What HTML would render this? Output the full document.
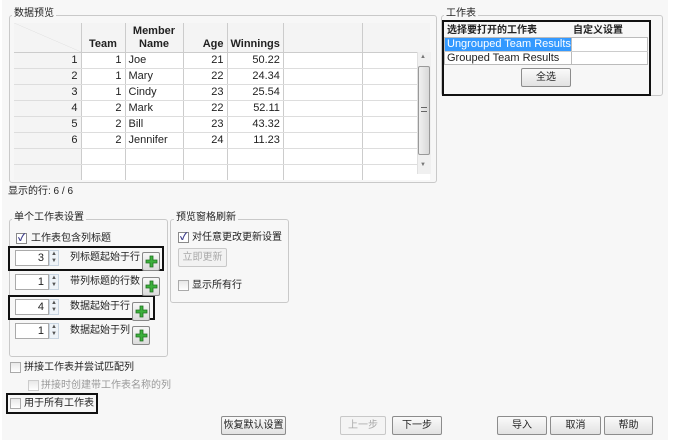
<!DOCTYPE html>
<html><head><meta charset="utf-8"><style>
*{box-sizing:border-box;margin:0;padding:0}
body{width:675px;height:444px;background:#fff;font-family:"Liberation Sans","Noto Sans CJK SC",sans-serif;font-size:11px;color:#222;position:relative;overflow:hidden}
.a{position:absolute}
.bg{left:2px;top:0;width:666px;height:440px;background:#f7f7f7}
.grp{border:1px solid #c9c9c9;border-radius:3px}
.ttl{background:#f7f7f7;padding:0 2px;line-height:12px;white-space:nowrap;font-size:10px}
.t{white-space:nowrap;line-height:13px;font-size:10px}
.btn{border:1px solid #8c8c8c;border-radius:2px;background:linear-gradient(#fafafa,#e2e2e2);text-align:center;line-height:17px;white-space:nowrap;font-size:10px}
.cb{width:11px;height:11px;border:1px solid #aaa;background:linear-gradient(#e8e8e8,#fff)}
.cbk{width:11px;height:11px;border:1px solid #8a8a8a;background:#fff;font-size:10px;line-height:9px;text-align:center;color:#3a3a8a;font-weight:bold}
.blk{border:2px solid #111}
.spin{width:34px;height:16px;border:1px solid #aaa;background:#fff;text-align:right;padding-right:4px;line-height:14px}
.arr{width:10px;height:16px;border:1px solid #c8d4e0;background:#eef3f8;font-size:6px;line-height:7px;text-align:center;color:#555}
.plus{width:18px;height:19px;border:1px solid #888;border-radius:2px;background:linear-gradient(#f8f8f8,#dcdcdc)}
.plus svg{position:absolute;left:2px;top:2px}
table{border-collapse:collapse;position:absolute;left:14px;top:23px;background:#fff}
td{border-right:1px solid #ccc;border-bottom:1px solid #ddd;height:16px;padding:0 3px;line-height:15px;white-space:nowrap}
th{border-right:1px solid #ccc;border-bottom:1px solid #ccc;font-weight:bold;background:#f4f4f4;height:29px;vertical-align:bottom;padding:0 3px 1px;line-height:13px}
.r{text-align:right}
.rh{background:#f4f4f4;text-align:right}
</style></head><body>
<div class="a bg"></div>

<div class="a grp" style="left:9px;top:15px;width:428px;height:168px"></div>
<div class="a ttl" style="left:12px;top:8px">数据预览</div>
<table>
<tr><th style="width:67px;background:linear-gradient(to top right,#f4f4f4 49.5%,#ddd 50%,#f4f4f4 51%)"></th><th style="width:44px">Team</th><th style="width:58px">Member<br>Name</th><th class="r" style="width:44px">Age</th><th style="width:56px">Winnings</th><th style="width:79px;background:#f4f4f4"></th><th style="width:68px;border-right:none"></th></tr>
<tr><td class="rh">1</td><td class="r">1</td><td>Joe</td><td class="r">21</td><td class="r">50.22</td><td></td><td style="border-right:none"></td></tr>
<tr><td class="rh">2</td><td class="r">1</td><td>Mary</td><td class="r">22</td><td class="r">24.34</td><td></td><td style="border-right:none"></td></tr>
<tr><td class="rh">3</td><td class="r">1</td><td>Cindy</td><td class="r">23</td><td class="r">25.54</td><td></td><td style="border-right:none"></td></tr>
<tr><td class="rh">4</td><td class="r">2</td><td>Mark</td><td class="r">22</td><td class="r">52.11</td><td></td><td style="border-right:none"></td></tr>
<tr><td class="rh">5</td><td class="r">2</td><td>Bill</td><td class="r">23</td><td class="r">43.32</td><td></td><td style="border-right:none"></td></tr>
<tr><td class="rh">6</td><td class="r">2</td><td>Jennifer</td><td class="r">24</td><td class="r">11.23</td><td></td><td style="border-right:none"></td></tr>
<tr><td class="rh"></td><td></td><td></td><td></td><td></td><td></td><td style="border-right:none"></td></tr>
<tr><td class="rh" style="height:6px;border-bottom:none"></td><td style="height:6px;border-bottom:none"></td><td style="border-bottom:none"></td><td style="border-bottom:none"></td><td style="border-bottom:none"></td><td style="border-bottom:none"></td><td style="border:none"></td></tr>
</table>
<div class="a" style="left:417px;top:52px;width:14px;height:122px;background:#f0f0f0;border-left:1px solid #e0e0e0"></div>
<div class="a" style="left:418px;top:66px;width:12px;height:89px;border:1px solid #999;border-radius:2px;background:linear-gradient(90deg,#f0f0f0,#d8d8d8)"></div>
<div class="a" style="left:420px;top:54px;font-size:6px;color:#777">▲</div>
<div class="a" style="left:420px;top:162px;font-size:6px;color:#777">▼</div>
<div class="a" style="left:421px;top:107px;width:6px;height:5px;border-top:1px solid #666;border-bottom:1px solid #666"></div>
<div class="a t" style="left:8px;top:185px">显示的行: 6 / 6</div>

<div class="a grp" style="left:441px;top:15px;width:222px;height:81px"></div>
<div class="a ttl" style="left:444px;top:8px">工作表</div>
<div class="a blk" style="left:442px;top:20px;width:209px;height:76px"></div>
<div class="a" style="left:444px;top:37px;width:204px;height:28px;border:1px solid #bbb;background:#fff"></div>
<div class="a" style="left:445px;top:38px;width:126px;height:13px;background:#3399ff"></div>
<div class="a" style="left:571px;top:37px;width:1px;height:28px;background:#bbb"></div>
<div class="a" style="left:444px;top:51px;width:204px;height:1px;background:#ccc"></div>
<div class="a t" style="left:447px;top:24px;font-weight:bold">选择要打开的工作表</div>
<div class="a t" style="left:573px;top:24px;font-weight:bold">自定义设置</div>
<div class="a t" style="left:447px;top:38px;color:#fff;font-size:11px">Ungrouped Team Results</div>
<div class="a t" style="left:447px;top:52px;font-size:11px">Grouped Team Results</div>
<div class="a btn" style="left:521px;top:68px;width:50px;height:19px">全选</div>

<div class="a grp" style="left:9px;top:219px;width:159px;height:138px"></div>
<div class="a ttl" style="left:12px;top:212px">单个工作表设置</div>
<div class="a cbk" style="left:16px;top:233px">✓</div>
<div class="a t" style="left:31px;top:232px">工作表包含列标题</div>
<div class="a blk" style="left:8px;top:246px;width:156px;height:25px"></div>
<div class="a blk" style="left:8px;top:295px;width:147px;height:25px"></div>

<div class="a spin" style="left:15px;top:250px">3</div><div class="a arr" style="left:49px;top:250px">▲<br>▼</div>
<div class="a t" style="left:70px;top:251px">列标题起始于行</div>
<div class="a plus" style="left:142px;top:252px"><svg width="13" height="13"><path d="M5 1h3v4h4v3H8v4H5V8H1V5h4z" fill="#3cb03c" stroke="#207020" stroke-width=".8"/></svg></div>

<div class="a spin" style="left:15px;top:274px">1</div><div class="a arr" style="left:49px;top:274px">▲<br>▼</div>
<div class="a t" style="left:70px;top:275px">带列标题的行数</div>
<div class="a plus" style="left:142px;top:277px"><svg width="13" height="13"><path d="M5 1h3v4h4v3H8v4H5V8H1V5h4z" fill="#3cb03c" stroke="#207020" stroke-width=".8"/></svg></div>

<div class="a spin" style="left:15px;top:299px">4</div><div class="a arr" style="left:49px;top:299px">▲<br>▼</div>
<div class="a t" style="left:70px;top:300px">数据起始于行</div>
<div class="a plus" style="left:132px;top:302px"><svg width="13" height="13"><path d="M5 1h3v4h4v3H8v4H5V8H1V5h4z" fill="#3cb03c" stroke="#207020" stroke-width=".8"/></svg></div>

<div class="a spin" style="left:15px;top:323px">1</div><div class="a arr" style="left:49px;top:323px">▲<br>▼</div>
<div class="a t" style="left:70px;top:324px">数据起始于列</div>
<div class="a plus" style="left:132px;top:326px"><svg width="13" height="13"><path d="M5 1h3v4h4v3H8v4H5V8H1V5h4z" fill="#3cb03c" stroke="#207020" stroke-width=".8"/></svg></div>

<div class="a grp" style="left:170px;top:219px;width:119px;height:84px"></div>
<div class="a ttl" style="left:174px;top:212px">预览窗格刷新</div>
<div class="a cbk" style="left:178px;top:232px">✓</div>
<div class="a t" style="left:192px;top:231px">对任意更改更新设置</div>
<div class="a btn" style="left:178px;top:248px;width:49px;height:19px;color:#aaa;border-color:#c8c8c8;background:#f2f2f2">立即更新</div>
<div class="a cb" style="left:178px;top:280px"></div>
<div class="a t" style="left:192px;top:279px">显示所有行</div>

<div class="a cb" style="left:10px;top:362px"></div>
<div class="a t" style="left:24px;top:361px">拼接工作表并尝试匹配列</div>
<div class="a cb" style="left:28px;top:380px;border-color:#ccc"></div>
<div class="a t" style="left:41px;top:379px;color:#999">拼接时创建带工作表名称的列</div>
<div class="a blk" style="left:6px;top:393px;width:92px;height:21px"></div>
<div class="a cb" style="left:10px;top:398px"></div>
<div class="a t" style="left:24px;top:397px">用于所有工作表</div>

<div class="a btn" style="left:221px;top:416px;width:65px;height:19px">恢复默认设置</div>
<div class="a btn" style="left:340px;top:416px;width:46px;height:19px;color:#aaa;border-color:#c8c8c8;background:#f4f4f4">上一步</div>
<div class="a btn" style="left:392px;top:416px;width:50px;height:19px">下一步</div>
<div class="a btn" style="left:497px;top:416px;width:50px;height:19px">导入</div>
<div class="a btn" style="left:550px;top:416px;width:51px;height:19px">取消</div>
<div class="a btn" style="left:604px;top:416px;width:49px;height:19px">帮助</div>
</body></html>
